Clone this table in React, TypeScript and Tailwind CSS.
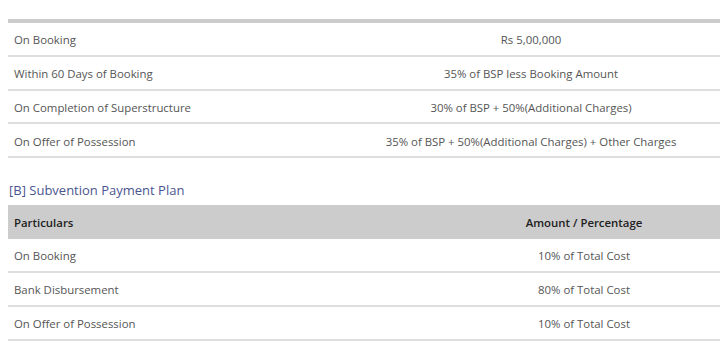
import React from "react";

const top = [
  ["On Booking", "Rs 5,00,000"],
  ["Within 60 Days of Booking", "35% of BSP less Booking Amount"],
  ["On Completion of Superstructure", "30% of BSP + 50%(Additional Charges)"],
  ["On Offer of Possession", "35% of BSP + 50%(Additional Charges) + Other Charges"],
];

const bottom = [
  ["On Booking", "10% of Total Cost"],
  ["Bank Disbursement", "80% of Total Cost"],
  ["On Offer of Possession", "10% of Total Cost"],
];

export default function App() {
  return (
    <div
      className="w-[720px] h-[361px] overflow-hidden bg-white text-[11.4px] text-[#555]"
      style={{ fontFamily: '"Open Sans", "Noto Sans", sans-serif' }}
    >
      <div className="pl-2 pt-[19px]">
        <div className="h-[4px] bg-[#cccccc]" />
        {top.map(([a, b], i) => (
          <div
            key={i}
            className="grid grid-cols-[334px_1fr] h-[33.75px] items-center pt-[2px] border-b-2 border-[#dedede]"
          >
            <div className="pl-[6px]">{a}</div>
            <div className="text-center">{b}</div>
          </div>
        ))}
        <div className="pt-[22px] pb-[5px] text-[13px] text-[#4a5590] leading-[20px] pl-[1px]">[B] Subvention Payment Plan</div>
        <div className="grid grid-cols-[440px_1fr] h-[34px] items-center pt-[1px] bg-[#cccccc] text-[#222] font-semibold">
          <div className="pl-[6px]">Particulars</div>
          <div className="text-center">Amount / Percentage</div>
        </div>
        {bottom.map(([a, b], i) => (
          <div
            key={i}
            className="grid grid-cols-[440px_1fr] h-[34px] items-center pt-[1px] border-b-2 border-[#dedede]"
          >
            <div className="pl-[6px]">{a}</div>
            <div className="text-center">{b}</div>
          </div>
        ))}
      </div>
    </div>
  );
}
